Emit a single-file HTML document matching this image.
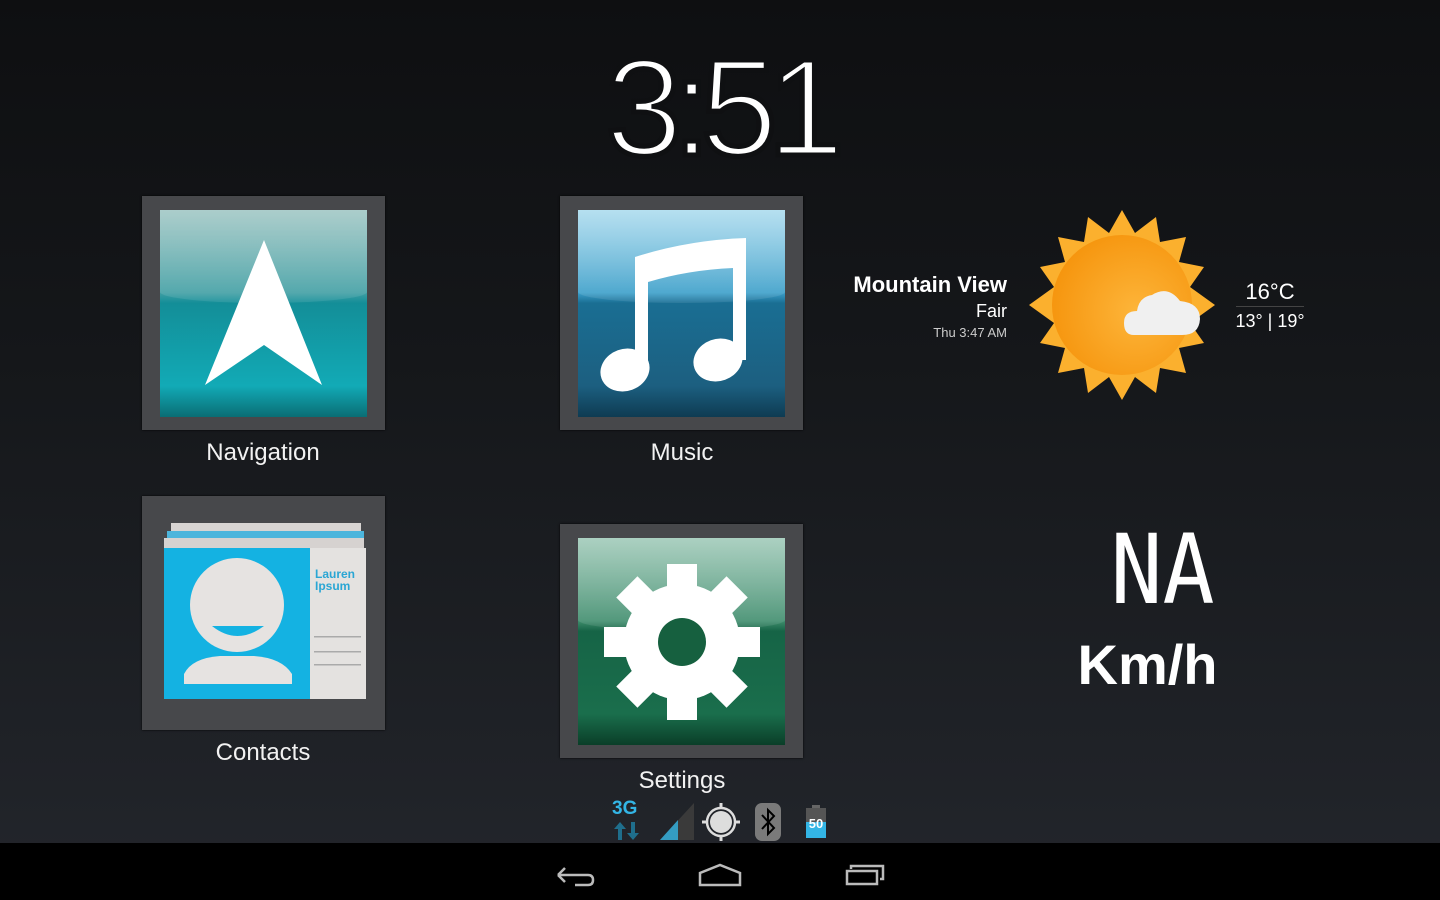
<!DOCTYPE html>
<html><head><meta charset="utf-8"><style>
*{margin:0;padding:0;box-sizing:border-box}
body{width:1440px;height:900px;overflow:hidden;position:relative;background:linear-gradient(#0e0f11 0%,#15171a 40%,#23262c 100%);font-family:"Liberation Sans",sans-serif;color:#fff}
.abs{position:absolute}
.frame{position:absolute;width:243px;height:234px;background:#47484b;box-shadow:0 0 2px #000}
.inner{position:absolute;left:18px;top:14px;width:207px;height:207px;overflow:hidden}
.gloss{position:absolute;left:0;top:0;width:100%;height:45%;background:linear-gradient(rgba(255,255,255,.35),rgba(255,255,255,.08));border-radius:0 0 50% 50%/0 0 12% 12%}
.lbl{position:absolute;width:300px;text-align:center;font-size:24px;color:#f2f2f2}
#nav{position:absolute;left:0;top:843px;width:1440px;height:57px;background:#000}
</style></head><body>

<div class="abs" style="left:580px;top:38px;width:280px;text-align:center;font-size:138px;line-height:140px;color:#fff;letter-spacing:-10px;-webkit-text-stroke:5px #0f1012">3:51</div>

<!-- Navigation -->
<div class="frame" style="left:142px;top:196px">
 <div class="inner" style="background:linear-gradient(#7fb3b0 0%,#3f9ea3 40%,#138e98 45%,#12aab6 85%,#0a6d74 100%)">
  <div class="gloss"></div>
  <svg class="abs" style="left:0;top:0" width="207" height="207"><polygon points="104,30 162,175 104,135 45,175" fill="#fff"/></svg>
 </div>
</div>
<div class="lbl" style="left:113px;top:439px">Navigation</div>

<!-- Music -->
<div class="frame" style="left:560px;top:196px">
 <div class="inner" style="background:linear-gradient(#8fcfe8 0%,#3a9ec9 40%,#1a6e93 45%,#1c5f80 85%,#0e3b52 100%)">
  <div class="gloss"></div>
  <svg class="abs" style="left:0;top:0" width="207" height="207">
   <path d="M57 47 Q110 30 168 28 L168 150 L155 150 L155 58 Q110 60 70 72 L70 160 L57 160Z" fill="#fff"/>
   <ellipse cx="47" cy="160" rx="25" ry="21" fill="#fff" transform="rotate(-20 47 160)"/>
   <ellipse cx="140" cy="150" rx="25" ry="21" fill="#fff" transform="rotate(-20 140 150)"/>
  </svg>
 </div>
</div>
<div class="lbl" style="left:532px;top:439px">Music</div>

<!-- Contacts -->
<div class="frame" style="left:142px;top:496px">
 <svg class="abs" style="left:0;top:0" width="243" height="234">
  <rect x="29" y="27" width="190" height="12" fill="#d8d4d2"/>
  <rect x="25" y="35" width="197" height="10" fill="#4cb5dc"/>
  <rect x="22" y="42" width="200" height="10" fill="#d6d2d0"/>
  <rect x="22" y="52" width="146" height="151" fill="#14b2e2"/>
  <rect x="168" y="52" width="56" height="151" fill="#e4e2e0"/>
  <text x="173" y="82" font-family="Liberation Sans" font-size="12" fill="#2aa6d4" font-weight="bold">Lauren</text>
  <text x="173" y="94" font-family="Liberation Sans" font-size="12" fill="#2aa6d4" font-weight="bold">Ipsum</text>
  <rect x="172" y="140" width="47" height="1.5" fill="#aaa"/><rect x="172" y="155" width="47" height="1.5" fill="#aaa"/><rect x="172" y="168" width="47" height="1.5" fill="#aaa"/>
  <circle cx="95" cy="109" r="47" fill="#e6e3e1"/>
  <path d="M70 130 Q95 150 122 130Z" fill="#14b2e2"/>
  <path d="M42 188 L42 178 Q50 162 78 160 L112 160 Q140 162 150 178 L150 188Z" fill="#e6e3e1"/>
 </svg>
</div>
<div class="lbl" style="left:113px;top:739px">Contacts</div>

<!-- Settings -->
<div class="frame" style="left:560px;top:524px">
 <div class="inner" style="background:linear-gradient(#7fb7a0 0%,#3e8c6c 40%,#166446 45%,#1a6e4c 85%,#0a3e28 100%)">
  <div class="gloss"></div>
  <svg class="abs" style="left:0;top:0" width="207" height="207" viewBox="0 0 207 207">
   <g transform="translate(104,104)" fill="#fff">
    <circle r="58"/>
    <g id="t"><rect x="-15" y="-78" width="30" height="30"/></g>
    <use href="#t" transform="rotate(45)"/><use href="#t" transform="rotate(90)"/><use href="#t" transform="rotate(135)"/>
    <use href="#t" transform="rotate(180)"/><use href="#t" transform="rotate(225)"/><use href="#t" transform="rotate(270)"/><use href="#t" transform="rotate(315)"/>
    <circle r="24" fill="#16603f"/>
   </g>
  </svg>
 </div>
</div>
<div class="lbl" style="left:532px;top:767px">Settings</div>

<!-- Weather -->
<div class="abs" style="left:800px;top:272px;width:207px;text-align:right;font-size:22px;font-weight:bold">Mountain View</div>
<div class="abs" style="left:800px;top:301px;width:207px;text-align:right;font-size:18px">Fair</div>
<div class="abs" style="left:800px;top:325px;width:207px;text-align:right;font-size:13px;color:#ccc">Thu 3:47 AM</div>
<svg class="abs" style="left:1022px;top:205px" width="200" height="200" viewBox="0 0 200 200">
 <defs><radialGradient id="sg" cx="0.6" cy="0.55" r="0.6"><stop offset="0" stop-color="#fdb53a"/><stop offset="1" stop-color="#f6960f"/></radialGradient></defs>
 <polygon fill="#fbb02e" points="100,5 113,28 134,12 138,37 164,32 157,57 182,62 168,82 193,100 168,118 182,138 157,143 164,168 138,163 134,188 113,172 100,195 87,172 66,188 62,163 36,168 43,143 18,138 32,118 7,100 32,82 18,62 43,57 36,32 62,37 66,12 87,28"/>
 <circle cx="100" cy="100" r="70" fill="url(#sg)"/>
 <path d="M112 130 Q102 130 102 118 Q102 106 115 106 Q117 92 130 90 Q146 80 158 96 Q178 98 178 114 Q177 130 160 130Z" fill="#f0f0f0"/>
</svg>
<div class="abs" style="left:1230px;top:279px;width:80px;text-align:center;font-size:22px">16°C</div>
<div class="abs" style="left:1236px;top:306px;width:68px;height:1px;background:#444"></div>
<div class="abs" style="left:1230px;top:311px;width:80px;text-align:center;font-size:18px">13° | 19°</div>

<!-- Speed -->
<div class="abs" style="left:1100px;top:515px;width:125px;text-align:center;font-family:'DejaVu Sans Mono',monospace;font-size:96px;line-height:110px;transform:scaleX(.9)">NA</div>
<div class="abs" style="left:1060px;top:630px;width:175px;text-align:center;font-size:56px;font-weight:bold;line-height:70px">Km/h</div>

<!-- Status icons -->
<div class="abs" style="left:612px;top:798px;font-size:19px;font-weight:bold;color:#33b5e5">3G</div>
<svg class="abs" style="left:612px;top:820px" width="30" height="22"><path d="M8 2 L14 9 L10 9 L10 20 L6 20 L6 9 L2 9Z M21 20 L27 13 L23 13 L23 2 L19 2 L19 13 L15 13Z" fill="#1f6e8c"/></svg>
<svg class="abs" style="left:660px;top:803px" width="34" height="37"><polygon points="34,0 34,37 0,37" fill="#3a3a3a"/><polygon points="18,17 18,37 0,37" fill="#33b5e5" opacity=".8"/></svg>
<svg class="abs" style="left:702px;top:803px" width="38" height="38"><circle cx="19" cy="19" r="11" fill="#ddd"/><circle cx="19" cy="19" r="14" fill="none" stroke="#ddd" stroke-width="2.5"/><path d="M19 0v6M19 32v6M0 19h6M32 19h6" stroke="#ddd" stroke-width="3"/></svg>
<svg class="abs" style="left:755px;top:803px" width="26" height="38"><rect x="0" y="0" width="26" height="38" rx="7" fill="#7a7a7a"/><path d="M7 12 L19 25 L13 31 L13 7 L19 13 L7 26" fill="none" stroke="#000" stroke-width="2"/></svg>
<svg class="abs" style="left:805px;top:805px" width="22" height="33"><rect x="7" y="0" width="8" height="3" fill="#666"/><rect x="1" y="3" width="20" height="30" fill="#555"/><rect x="1" y="17" width="20" height="16" fill="#33b5e5"/><text x="11" y="23" text-anchor="middle" font-family="Liberation Sans" font-weight="bold" font-size="13" fill="#fff">50</text></svg>

<div id="nav">
 <svg class="abs" style="left:555px;top:20px" width="40" height="24"><path d="M3 12 L10 5 M3 12 L10 19 M3 12 H33 Q38 12 38 17 Q38 22 33 22 H20" fill="none" stroke="#bbb" stroke-width="2.5"/></svg>
 <svg class="abs" style="left:698px;top:20px" width="44" height="24"><path d="M2 22 V10 L22 2 L42 10 V22Z" fill="none" stroke="#bbb" stroke-width="2.5"/></svg>
 <svg class="abs" style="left:845px;top:20px" width="42" height="24"><rect x="2" y="8" width="30" height="13" fill="none" stroke="#bbb" stroke-width="2.5"/><path d="M6 6 V3 H38 V16 H35" fill="none" stroke="#bbb" stroke-width="2.5"/></svg>
</div>
</body></html>
